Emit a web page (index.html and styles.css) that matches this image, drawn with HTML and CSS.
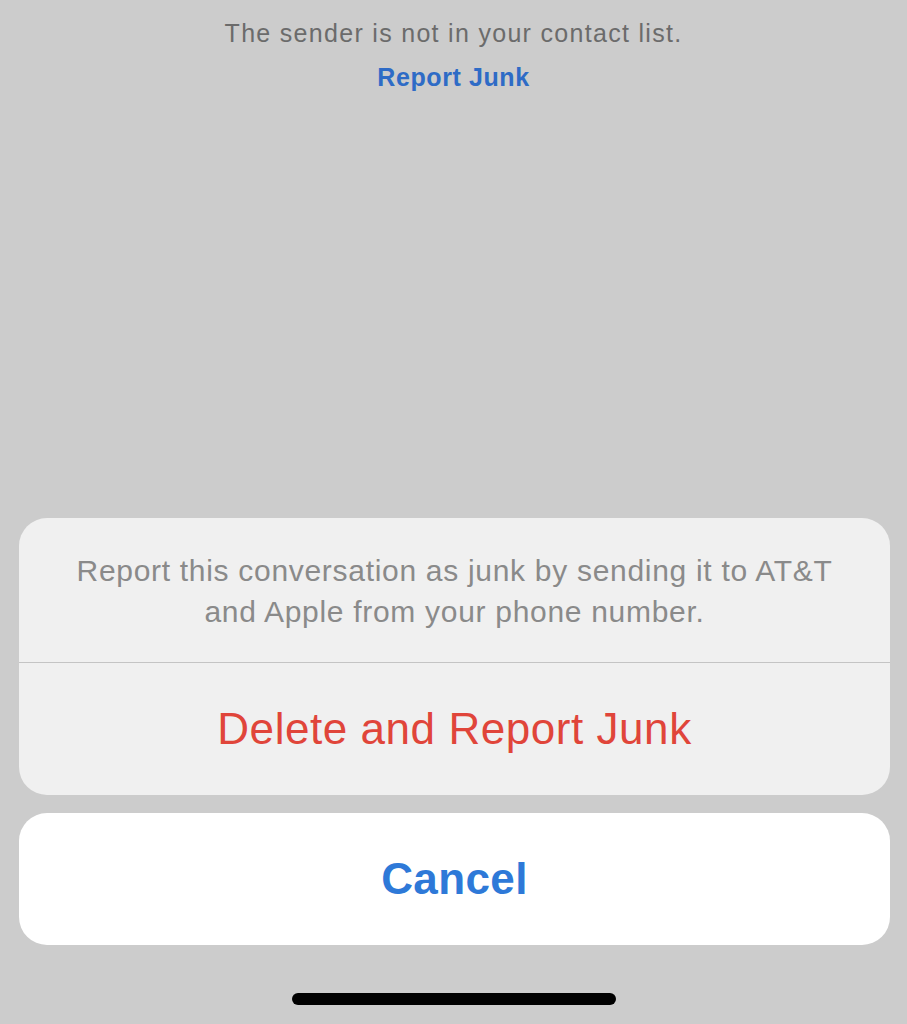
FILE: index.html
```html
<!DOCTYPE html>
<html lang="en">
<head>
<meta charset="utf-8">
<title>Report Junk</title>
<link rel="stylesheet" href="styles.css">
</head>
<body>
<div class="screen">
  <header class="notice">
    <p class="notice-text">The sender is not in your contact list.</p>
    <a class="notice-link" href="#">Report Junk</a>
  </header>
  <div class="spacer"></div>
  <section class="sheet">
    <div class="group">
      <p class="message">Report this conversation as junk by sending it to AT&amp;T and Apple from your phone number.</p>
      <button class="action destructive">Delete and Report Junk</button>
    </div>
    <button class="cancel">Cancel</button>
  </section>
  <div class="home-bar"><span class="indicator"></span></div>
</div>
</body>
</html>
```
FILE: styles.css
```css
html, body {
  margin: 0;
  padding: 0;
  background: #cccccc;
}
body {
  font-family: "Liberation Sans", Arial, sans-serif;
}
.screen {
  width: 907px;
  height: 1024px;
  display: flex;
  flex-direction: column;
  overflow: hidden;
}
.notice {
  display: flex;
  flex-direction: column;
  align-items: center;
  padding-top: 18px;
}
.notice-text {
  margin: 0;
  font-size: 25px;
  line-height: 30px;
  color: #6b6b6b;
  letter-spacing: 1.3px;
}
.notice-link {
  margin-top: 14px;
  font-size: 25px;
  line-height: 30px;
  font-weight: bold;
  color: #2e6bc6;
  letter-spacing: 0.6px;
  text-decoration: none;
}
.spacer {
  flex: 1;
}
.sheet {
  display: flex;
  flex-direction: column;
  gap: 18px;
  padding: 0 17px 0 19px;
}
.group {
  background: #f0f0f0;
  border-radius: 28px;
  display: flex;
  flex-direction: column;
  overflow: hidden;
}
.message {
  margin: 0;
  padding: 32px 50px 30px;
  text-align: center;
  font-size: 30px;
  line-height: 41px;
  letter-spacing: 0.7px;
  color: #8a8a8a;
  border-bottom: 1.5px solid #c4c4c4;
}
.action, .cancel {
  border: none;
  font-family: inherit;
  display: flex;
  align-items: center;
  justify-content: center;
  cursor: pointer;
}
.action {
  height: 132px;
  background: transparent;
  font-size: 44px;
  letter-spacing: 0.55px;
  color: #e0453a;
}
.cancel {
  height: 132px;
  background: #ffffff;
  border-radius: 28px;
  font-size: 44px;
  font-weight: bold;
  letter-spacing: 0.4px;
  color: #2e79d8;
}
.home-bar {
  height: 79px;
  display: flex;
  justify-content: center;
  align-items: flex-start;
  padding-top: 48px;
  box-sizing: border-box;
}
.indicator {
  width: 324px;
  height: 12px;
  border-radius: 6px;
  background: #000000;
}
```
